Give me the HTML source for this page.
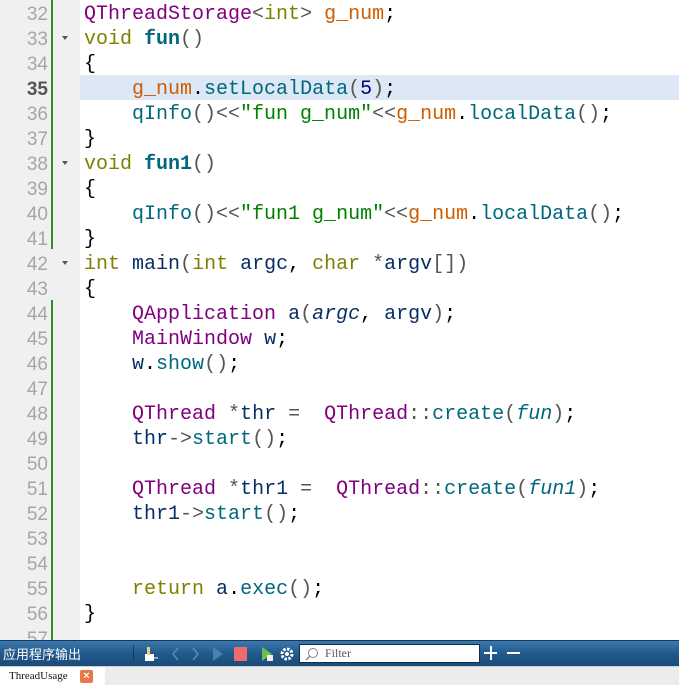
<!DOCTYPE html>
<html><head><meta charset="utf-8"><style>
*{margin:0;padding:0;box-sizing:border-box}
body{width:679px;height:685px;overflow:hidden;background:#fff;position:relative;font-family:"Liberation Mono",monospace}
#gut{position:absolute;left:0;top:0;width:80px;height:640px;background:#f0f0f0}
.g{position:absolute;left:51px;width:2px;background:#2e8b2e}
.ln{position:absolute;left:0;width:48px;text-align:right;font-family:"Liberation Sans",sans-serif;font-size:19px;color:#a6a6a6;height:25px;line-height:25px}
.ln.b{color:#555;font-weight:bold}
.fold{position:absolute;left:62px;width:0;height:0;border-left:3px solid transparent;border-right:3px solid transparent;border-top:4px solid #555}
.l{position:absolute;left:84px;font-size:20px;height:25px;line-height:25px;white-space:pre;color:#000}
.t{color:#800080}.k{color:#808000}.f{color:#00677c}.fb{color:#00677c;font-weight:bold}
.gv{color:#ce5c00}.s{color:#008000}.v{color:#092e64}.p{color:#555}.i{font-style:italic;color:#092e64}.n{color:#000080}
#hl{position:absolute;left:80px;top:75px;width:599px;height:25px;background:#dce8f5}
#bar{position:absolute;left:0;top:640px;width:679px;height:26px;background:linear-gradient(#3a78ad,#22598c 50%,#1b4b78);border-top:1px solid #15395c}
#tabs{position:absolute;left:0;top:666px;width:679px;height:19px;background:#ececec;border-top:1px solid #d0d0d0}
</style></head><body>
<div id="gut"></div>
<div id="hl"></div>
<div class="g" style="top:0;height:249px"></div>
<div class="g" style="top:300px;height:340px"></div>

<div class="ln" style="top:2px">32</div>
<div class="ln" style="top:27px">33</div>
<div class="ln" style="top:52px">34</div>
<div class="ln b" style="top:77px">35</div>
<div class="ln" style="top:102px">36</div>
<div class="ln" style="top:127px">37</div>
<div class="ln" style="top:152px">38</div>
<div class="ln" style="top:177px">39</div>
<div class="ln" style="top:202px">40</div>
<div class="ln" style="top:227px">41</div>
<div class="ln" style="top:252px">42</div>
<div class="ln" style="top:277px">43</div>
<div class="ln" style="top:302px">44</div>
<div class="ln" style="top:327px">45</div>
<div class="ln" style="top:352px">46</div>
<div class="ln" style="top:377px">47</div>
<div class="ln" style="top:402px">48</div>
<div class="ln" style="top:427px">49</div>
<div class="ln" style="top:452px">50</div>
<div class="ln" style="top:477px">51</div>
<div class="ln" style="top:502px">52</div>
<div class="ln" style="top:527px">53</div>
<div class="ln" style="top:552px">54</div>
<div class="ln" style="top:577px">55</div>
<div class="ln" style="top:602px">56</div>
<div class="ln" style="top:627px">57</div>
<div class="fold" style="top:36px"></div>
<div class="fold" style="top:161px"></div>
<div class="fold" style="top:261px"></div>

<div class="l" style="top:2px"><span class="t">QThreadStorage</span><span class="p">&lt;</span><span class="k">int</span><span class="p">&gt;</span> <span class="gv">g_num</span>;</div>
<div class="l" style="top:27px"><span class="k">void</span> <span class="fb">fun</span><span class="p">()</span></div>
<div class="l" style="top:52px">{</div>
<div class="l" style="top:77px">    <span class="gv">g_num</span>.<span class="f">setLocalData</span><span class="p">(</span><span class="n">5</span><span class="p">)</span>;</div>
<div class="l" style="top:102px">    <span class="f">qInfo</span><span class="p">()&lt;&lt;</span><span class="s">"fun g_num"</span><span class="p">&lt;&lt;</span><span class="gv">g_num</span>.<span class="f">localData</span><span class="p">()</span>;</div>
<div class="l" style="top:127px">}</div>
<div class="l" style="top:152px"><span class="k">void</span> <span class="fb">fun1</span><span class="p">()</span></div>
<div class="l" style="top:177px">{</div>
<div class="l" style="top:202px">    <span class="f">qInfo</span><span class="p">()&lt;&lt;</span><span class="s">"fun1 g_num"</span><span class="p">&lt;&lt;</span><span class="gv">g_num</span>.<span class="f">localData</span><span class="p">()</span>;</div>
<div class="l" style="top:227px">}</div>
<div class="l" style="top:252px"><span class="k">int</span> <span class="v">main</span><span class="p">(</span><span class="k">int</span> <span class="v">argc</span>, <span class="k">char</span> <span class="p">*</span><span class="v">argv</span><span class="p">[])</span></div>
<div class="l" style="top:277px">{</div>
<div class="l" style="top:302px">    <span class="t">QApplication</span> <span class="v">a</span><span class="p">(</span><span class="i">argc</span>, <span class="v">argv</span><span class="p">)</span>;</div>
<div class="l" style="top:327px">    <span class="t">MainWindow</span> <span class="v">w</span>;</div>
<div class="l" style="top:352px">    <span class="v">w</span>.<span class="f">show</span><span class="p">()</span>;</div>
<div class="l" style="top:402px">    <span class="t">QThread</span> <span class="p">*</span><span class="v">thr</span> <span class="p">=</span>  <span class="t">QThread</span><span class="p">::</span><span class="f">create</span><span class="p">(</span><span class="i" style="color:#00677c">fun</span><span class="p">)</span>;</div>
<div class="l" style="top:427px">    <span class="v">thr</span><span class="p">-&gt;</span><span class="f">start</span><span class="p">()</span>;</div>
<div class="l" style="top:477px">    <span class="t">QThread</span> <span class="p">*</span><span class="v">thr1</span> <span class="p">=</span>  <span class="t">QThread</span><span class="p">::</span><span class="f">create</span><span class="p">(</span><span class="i" style="color:#00677c">fun1</span><span class="p">)</span>;</div>
<div class="l" style="top:502px">    <span class="v">thr1</span><span class="p">-&gt;</span><span class="f">start</span><span class="p">()</span>;</div>
<div class="l" style="top:577px">    <span class="k">return</span> <span class="v">a</span>.<span class="f">exec</span><span class="p">()</span>;</div>
<div class="l" style="top:602px">}</div>

<div id="bar">
 <div style="position:absolute;left:3px;top:3px;color:#fff;font:13px 'Noto Sans CJK SC',sans-serif;line-height:19px">应用程序输出</div>
 <div style="position:absolute;left:133px;top:4px;width:1px;height:17px;background:#15395c"></div>
 <svg style="position:absolute;left:140px;top:3px" width="200" height="20">
  <rect x="5" y="10" width="9" height="7" fill="#fff"/><rect x="7" y="3" width="3" height="8" fill="#e8d28a"/><line x1="14" y1="14" x2="18" y2="14" stroke="#fff"/>
  <path d="M38 4 L33 10 L38 16" stroke="#5f89b2" fill="none" stroke-width="1.5"/>
  <path d="M53 4 L58 10 L53 16" stroke="#5f89b2" fill="none" stroke-width="1.5"/>
  <path d="M73 3 L83 10 L73 17Z" fill="#4f7fab"/>
  <rect x="94" y="3" width="13" height="14" fill="#ee6b6b"/>
  <path d="M122 3 L132 10 L122 17Z" fill="#6cc04a"/><rect x="127" y="11" width="6" height="6" fill="#eee"/>
  <circle cx="147" cy="10" r="5" fill="none" stroke="#fff" stroke-width="3" stroke-dasharray="2.5 1.4"/><circle cx="147" cy="10" r="2" fill="#fff"/>
 </svg>
 <div style="position:absolute;left:299px;top:3px;width:181px;height:19px;background:#fff;border:1px solid #0e2d4c;font:12px 'Liberation Serif',serif;color:#555;padding-left:25px;line-height:17px">Filter
  <svg style="position:absolute;left:4px;top:2px" width="16" height="14"><circle cx="9" cy="6" r="4.5" stroke="#888" fill="none"/><line x1="6" y1="9" x2="2" y2="13" stroke="#888" stroke-width="1.5"/></svg></div>
 <div style="position:absolute;left:484px;top:11px;width:13px;height:2px;background:#fff"></div>
 <div style="position:absolute;left:489.5px;top:5px;width:2px;height:14px;background:#fff"></div>
 <div style="position:absolute;left:507px;top:11px;width:13px;height:2px;background:#fff"></div>
</div>
<div id="tabs">
 <div style="position:absolute;left:0;top:0;width:105px;height:19px;background:#fff;font:11px 'Liberation Serif',serif;line-height:18px;padding-left:9px;color:#111">ThreadUsage</div>
 <div style="position:absolute;left:80px;top:3px;width:13px;height:13px;background:#e8784a;border-radius:2px;color:#fff;font:bold 11px sans-serif;text-align:center;line-height:13px">×</div>
</div>
</body></html>
